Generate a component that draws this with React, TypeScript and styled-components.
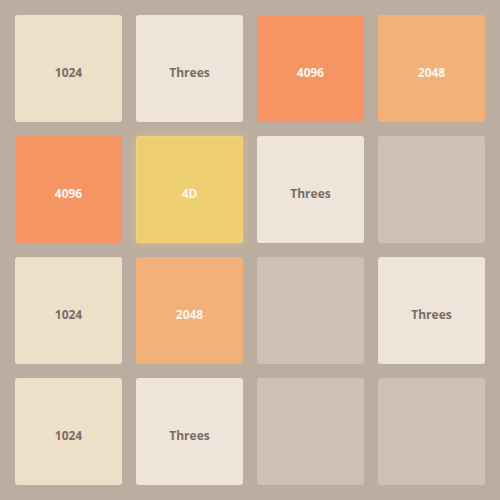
import styled, { createGlobalStyle, css } from "styled-components";

const GlobalStyle = createGlobalStyle`
  html, body {
    margin: 0;
    padding: 0;
    background: #bbada0;
  }
`;

type Kind = "empty" | "threes" | "k1" | "k2" | "k4" | "d4";

const cells: { kind: Kind; label?: string }[] = [
  { kind: "k1", label: "1024" },
  { kind: "threes", label: "Threes" },
  { kind: "k4", label: "4096" },
  { kind: "k2", label: "2048" },
  { kind: "k4", label: "4096" },
  { kind: "d4", label: "4D" },
  { kind: "threes", label: "Threes" },
  { kind: "empty" },
  { kind: "k1", label: "1024" },
  { kind: "k2", label: "2048" },
  { kind: "empty" },
  { kind: "threes", label: "Threes" },
  { kind: "k1", label: "1024" },
  { kind: "threes", label: "Threes" },
  { kind: "empty" },
  { kind: "empty" },
];

const palette: Record<Kind, { bg: string; fg: string }> = {
  empty: { bg: "#cdc1b4", fg: "transparent" },
  threes: { bg: "#eee4da", fg: "#776e65" },
  k1: { bg: "#ede0c8", fg: "#776e65" },
  k2: { bg: "#f2b179", fg: "#f9f6f2" },
  k4: { bg: "#f59563", fg: "#f9f6f2" },
  d4: { bg: "#edcf72", fg: "#f9f6f2" },
};

function App() {
  return (
    <>
      <GlobalStyle />
      <Board>
        {cells.map((c, i) => (
          <Tile key={i} $kind={c.kind}>
            {c.label}
          </Tile>
        ))}
      </Board>
    </>
  );
}

const Board = styled.div`
  width: 500px;
  height: 500px;
  box-sizing: border-box;
  padding: 15px;
  background: #bbada0;
  display: grid;
  grid-template-columns: repeat(4, 107px);
  grid-template-rows: repeat(4, 107px);
  gap: 14px;
`;

const Tile = styled.div<{ $kind: Kind }>`
  box-sizing: border-box;
  padding-top: 8px;
  border-radius: 3px;
  display: flex;
  align-items: center;
  justify-content: center;
  font-family: "Open Sans", "DejaVu Sans", sans-serif;
  font-weight: 700;
  font-size: 12px;
  background: ${(p) => palette[p.$kind].bg};
  color: ${(p) => palette[p.$kind].fg};

  ${(p) =>
    p.$kind === "d4" &&
    css`
      box-shadow: 0 0 10px 2px rgba(243, 215, 116, 0.35),
        inset 0 0 0 1px rgba(255, 255, 255, 0.12);
    `}
`;

export default App;
